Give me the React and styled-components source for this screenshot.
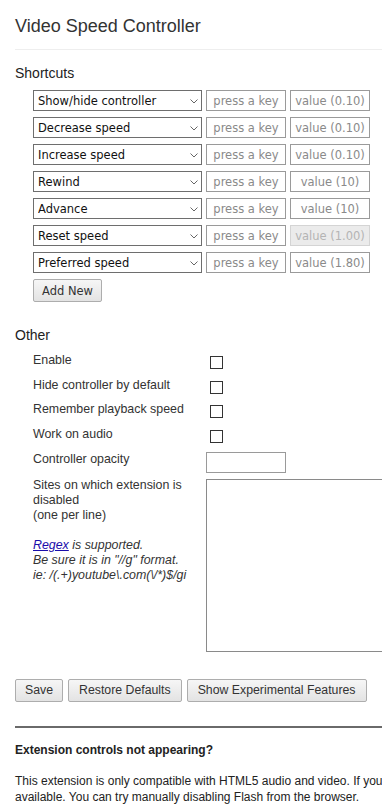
import React from 'react';
import styled, { createGlobalStyle } from 'styled-components';

const GlobalStyle = createGlobalStyle`
  html, body {
    margin: 0;
    padding: 0;
    overflow: hidden;
    background: #fff;
  }
  body {
    font-family: Arial, "Liberation Sans", sans-serif;
    color: #333;
  }
`;

const Page = styled.div`
  width: 640px;
  padding-left: 15px;
`;

const Header = styled.header`
  padding: 16px 0 12px;
  border-bottom: 1px solid #eee;
`;

const Title = styled.h1`
  margin: 0;
  font-family: "Liberation Sans", Arial, sans-serif;
  font-size: 18px;
  font-weight: normal;
  color: #333;
`;

const SectionTitle = styled.h3`
  margin: ${({ $top }) => $top}px 0 ${({ $bottom }) => $bottom}px;
  font-family: "Liberation Sans", Arial, sans-serif;
  font-size: 14px;
  font-weight: normal;
  color: #222;
`;

const ShortcutList = styled.div`
  display: flex;
  flex-direction: column;
  gap: 6px;
  padding-left: 18px;
`;

const ShortcutRow = styled.div`
  display: flex;
  gap: 4px;
  height: 21px;
`;

const SelectWrap = styled.div`
  position: relative;
  width: 169px;
  height: 21px;
`;

const Select = styled.select`
  appearance: none;
  box-sizing: border-box;
  width: 100%;
  height: 100%;
  margin: 0;
  padding: 0 0 0 4px;
  border: 1px solid #6e6e6e;
  border-radius: 0;
  background: #fff;
  font-family: "DejaVu Sans", sans-serif;
  font-size: 11.5px;
  color: #111;
`;

const Chevron = styled.svg`
  position: absolute;
  right: 4px;
  top: 9px;
  pointer-events: none;
`;

const TextInput = styled.input`
  box-sizing: border-box;
  width: 80px;
  height: 21px;
  margin: 0;
  padding: 0 3px;
  border: 1px solid ${({ disabled }) => (disabled ? '#d4d4d4' : '#9a9a9a')};
  border-radius: 0;
  background: ${({ disabled }) => (disabled ? '#ebebeb' : '#fff')};
  font-family: "DejaVu Sans", sans-serif;
  font-size: 11.5px;
  text-align: ${({ $center }) => ($center ? 'center' : 'left')};
  &::placeholder {
    color: ${({ disabled }) => (disabled ? '#b4b4b4' : '#8a8a8a')};
    opacity: 1;
  }
`;

const SmallButton = styled.button`
  box-sizing: border-box;
  height: 23px;
  margin: 0;
  padding: 0 ${({ $pad }) => $pad || 9}px;
  border: 1px solid #adadad;
  border-radius: 2px;
  background: linear-gradient(#f6f6f6, #e3e3e3);
  font-family: ${({ $tahoma }) =>
    $tahoma ? '"DejaVu Sans", sans-serif' : '"Liberation Sans", Arial, sans-serif'};
  font-size: ${({ $tahoma }) => ($tahoma ? '11.5px' : '12.3px')};
  color: #333;
`;

const AddRow = styled.div`
  padding-left: 18px;
  margin-top: 6px;
`;

const OptionList = styled.div`
  display: flex;
  flex-direction: column;
  gap: 5.67px;
  padding-left: 18px;
`;

const OptionRow = styled.div`
  display: flex;
  align-items: flex-start;
  min-height: 19px;
`;

const Label = styled.label`
  flex: none;
  width: 173px;
  font-family: "Liberation Sans", Arial, sans-serif;
  font-size: 12.4px;
  line-height: 15px;
  color: #333;
`;

const Check = styled.input.attrs({ type: 'checkbox' })`
  appearance: none;
  box-sizing: border-box;
  width: 13px;
  height: 13px;
  margin: 3px 0 0 4px;
  border: 1px solid #333;
  border-radius: 0;
  background: #fff;
`;

const Note = styled.span`
  font-style: italic;
`;

const Link = styled.a`
  color: #1a0dab;
  text-decoration: underline;
`;

const TextArea = styled.textarea`
  box-sizing: border-box;
  width: 300px;
  height: 173px;
  margin: 1px 0 0;
  border: 1px solid #8a8a8a;
  border-radius: 0;
  resize: none;
`;

const ButtonBar = styled.div`
  display: flex;
  gap: 5px;
  margin-top: 26.6px;
`;

const Rule = styled.div`
  margin-top: 24px;
  border-top: 2px solid #6a6a6a;
`;

const Faq = styled.div`
  font-family: "Liberation Sans", Arial, sans-serif;
  font-size: 12px;
  color: #222;
`;

const FaqTitle = styled.h4`
  margin: 15px 0 0;
  font-size: 12px;
  font-weight: bold;
`;

const FaqText = styled.p`
  margin: 16px 0 0;
  line-height: 16px;
  white-space: nowrap;
`;

const shortcuts = [
  { action: 'Show/hide controller', value: 'value (0.10)' },
  { action: 'Decrease speed', value: 'value (0.10)' },
  { action: 'Increase speed', value: 'value (0.10)' },
  { action: 'Rewind', value: 'value (10)' },
  { action: 'Advance', value: 'value (10)' },
  { action: 'Reset speed', value: 'value (1.00)', disabled: true },
  { action: 'Preferred speed', value: 'value (1.80)' },
];

const checks = [
  'Enable',
  'Hide controller by default',
  'Remember playback speed',
  'Work on audio',
];

function App() {
  return (
    <Page>
      <GlobalStyle />
      <Header>
        <Title>Video Speed Controller</Title>
      </Header>

      <SectionTitle $top={15} $bottom={9}>Shortcuts</SectionTitle>
      <ShortcutList>
        {shortcuts.map(s => (
          <ShortcutRow key={s.action}>
            <SelectWrap>
              <Select defaultValue={s.action}>
                <option>{s.action}</option>
              </Select>
              <Chevron width="8" height="5" viewBox="0 0 8 5">
                <path d="M0.5 0.5 L4 4 L7.5 0.5" fill="none" stroke="#666" strokeWidth="1" />
              </Chevron>
            </SelectWrap>
            <TextInput $center placeholder="press a key" />
            <TextInput $center placeholder={s.value} disabled={s.disabled} />
          </ShortcutRow>
        ))}
      </ShortcutList>
      <AddRow>
        <SmallButton $tahoma $pad={8}>Add New</SmallButton>
      </AddRow>

      <SectionTitle $top={24.6} $bottom={10.3}>Other</SectionTitle>
      <OptionList>
        {checks.map(c => (
          <OptionRow key={c}>
            <Label>{c}</Label>
            <Check />
          </OptionRow>
        ))}
        <OptionRow>
          <Label>Controller opacity</Label>
          <TextInput />
        </OptionRow>
        <OptionRow>
          <Label>
            Sites on which extension is disabled
            <br />
            (one per line)
            <br />
            <br />
            <Note>
              <Link href="#">Regex</Link> is supported.
              <br />
              Be sure it is in "//g" format.
              <br />
              ie: /(.+)youtube\.com(\/*)$/gi
            </Note>
          </Label>
          <TextArea />
        </OptionRow>
      </OptionList>

      <ButtonBar>
        <SmallButton $pad={9}>Save</SmallButton>
        <SmallButton $pad={10}>Restore Defaults</SmallButton>
        <SmallButton $pad={10}>Show Experimental Features</SmallButton>
      </ButtonBar>

      <Rule />

      <Faq>
        <FaqTitle>Extension controls not appearing?</FaqTitle>
        <FaqText>
          This extension is only compatible with HTML5 audio and video. If you don't see the controls showing up, chances are you are viewing a Flash video.
          <br />
          available. You can try manually disabling Flash from the browser.
        </FaqText>
      </Faq>
    </Page>
  );
}

export default App;
